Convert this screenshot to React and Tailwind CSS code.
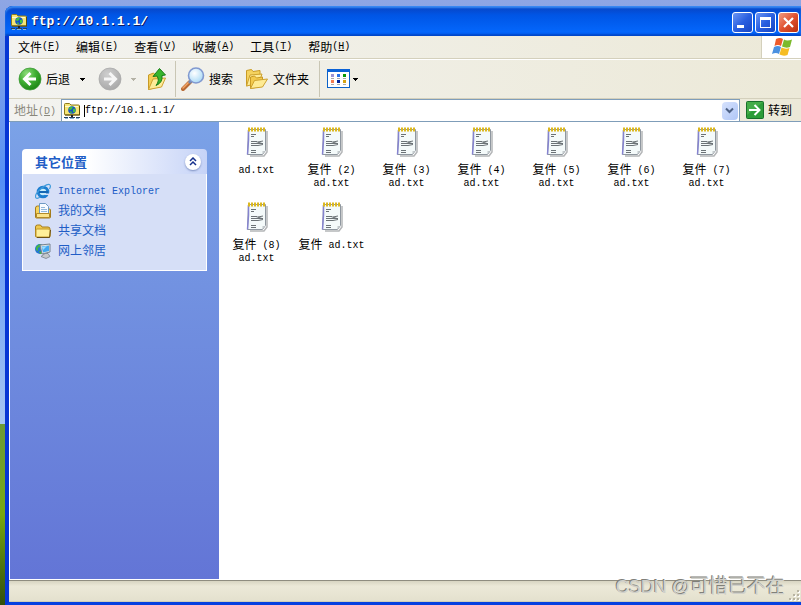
import React, { useState } from 'react';

const menus = [
  { name: '文件', hotkey: 'F' },
  { name: '编辑', hotkey: 'E' },
  { name: '查看', hotkey: 'V' },
  { name: '收藏', hotkey: 'A' },
  { name: '工具', hotkey: 'T' },
  { name: '帮助', hotkey: 'H' },
];

const files = [
  'ad.txt',
  '复件 (2) ad.txt',
  '复件 (3) ad.txt',
  '复件 (4) ad.txt',
  '复件 (5) ad.txt',
  '复件 (6) ad.txt',
  '复件 (7) ad.txt',
  '复件 (8) ad.txt',
  '复件 ad.txt',
];

const places = [
  { name: 'Internet Explorer', icon: ExplorerIcon },
  { name: '我的文档', icon: DocumentsIcon },
  { name: '共享文档', icon: FolderIcon },
  { name: '网上邻居', icon: NetworkIcon },
];

// Latin words are half as wide as a Chinese glyph, so they get the mono face
function Label({ text }) {
  return text.split(/( |[!-~]+)/).filter(Boolean).map((part, i) => (
    /^[ -~]/.test(part)
      ? <span key={i} className="font-['Liberation_Mono',monospace] text-[10px] leading-2 align-[1px]">{part}</span>
      : <span key={i}>{part}</span>
  ));
}

function FtpIcon() {
  return (
    <svg className="w-4 h-4 shrink-0" viewBox="0 0 16 16" aria-hidden="true">
      <path d="M.5 11V1.500q0-1 1-1h4L7 2h7.500q1 0 1 1v8q0 1-1 1h-13q-1 0-1-1z" fill="#f6e676" stroke="#8e7a1c" />
      <path d="M1 3h13v1H1z" fill="#fffbd0" />
      <path d="M15 3h1v9.500H1v-1h14z" fill="#5c4c08" />
      <circle cx="8" cy="7" r="3.800" fill="#1652c4" />
      <path d="M5 5q2-2 4-1.500L8 6 6.500 7 5 6.500zM9 6l2-.5q1 2-.5 4L9 9zM6 8l2 1-.5 1.500Q6 10 6 8z" fill="#3fc23f" />
      <path d="M7 12h2v2H7z" fill="#222" />
      <path d="M0 14.500h4M5 14.500h6M12 14.500h4" stroke="#27415f" />
      <path d="M1 15.500h3M6 15.500h4M12 15.500h3" stroke="#8cb6d8" />
    </svg>
  );
}

function WindowsFlag() {
  return (
    <svg className="w-5 h-5" viewBox="0 0 20 20" aria-hidden="true">
      <path d="M4 2q4-2 7 0L9 9Q6 7 2.500 9z" fill="#ee5a2a" />
      <path d="M12 2.500q3 2 8 0L18 10q-4 1.500-8-.5z" fill="#7cba2c" />
      <path d="M2 10q4-2 7 0l-2 7q-3-2-7 0z" fill="#4a90e0" />
      <path d="M9.500 10.500q4 2 8 .5l-2 7q-4 1.500-8-.5z" fill="#f6bd22" />
    </svg>
  );
}

function BackIcon() {
  return (
    <svg className="w-6 h-6" viewBox="0 0 24 24" aria-hidden="true">
      <defs>
        <radialGradient id="back" cx=".35" cy=".25" r=".8">
          <stop offset="0" stopColor="#8fdc7c" />
          <stop offset=".5" stopColor="#41b034" />
          <stop offset="1" stopColor="#1b8413" />
        </radialGradient>
      </defs>
      <circle cx="12" cy="12" r="11" fill="url(#back)" stroke="#3f9b38" strokeWidth=".8" />
      <path d="M12.500 6L6.500 12l6 6M7 12h11" fill="none" stroke="#fff" strokeWidth="3" />
    </svg>
  );
}

function ForwardIcon() {
  return (
    <svg className="w-6 h-6" viewBox="0 0 24 24" aria-hidden="true">
      <defs>
        <radialGradient id="forward" cx=".4" cy=".3" r=".8">
          <stop offset="0" stopColor="#cfcfcf" />
          <stop offset="1" stopColor="#a4a4a4" />
        </radialGradient>
      </defs>
      <circle cx="12" cy="12" r="11" fill="url(#forward)" stroke="#aaa" strokeWidth=".8" />
      <path d="M11.500 6l6 6-6 6M17 12H6" fill="none" stroke="#f6f6f6" strokeWidth="3" />
    </svg>
  );
}

function UpIcon() {
  return (
    <svg className="w-5 h-6" viewBox="0 0 20 24" aria-hidden="true">
      <path d="M1.500 22.500V8l5-2 2 2 6-1v12z" fill="#f4ce57" stroke="#c79a26" />
      <path d="M1.500 22.500L6 12l12.500-1-4 9z" fill="#fdeb98" stroke="#cfa233" />
      <path d="M6 9.500L12.500 1.500 18.500 8l-3.500.5q1 7-6 10 4-5 1-9.500z" fill="#37b52d" stroke="#187c17" />
    </svg>
  );
}

function SearchIcon() {
  return (
    <svg className="w-6 h-6" viewBox="0 0 24 24" aria-hidden="true">
      <defs>
        <radialGradient id="lens" cx=".4" cy=".35" r=".7">
          <stop offset="0" stopColor="#fff" />
          <stop offset="1" stopColor="#a5d8f6" />
        </radialGradient>
      </defs>
      <path d="M2 22l7-7" stroke="#b86a35" strokeWidth="4" strokeLinecap="round" />
      <path d="M2 21l6-6" stroke="#f3a566" strokeWidth="1.500" strokeLinecap="round" />
      <path d="M8 16l3-3" stroke="#7189b5" strokeWidth="3" />
      <circle cx="15" cy="8.500" r="7.500" fill="url(#lens)" stroke="#8199d0" strokeWidth="1.600" />
    </svg>
  );
}

function FoldersIcon() {
  return (
    <svg className="w-6 h-6" viewBox="0 0 24 24" aria-hidden="true">
      <path d="M1.500 19V3.500l5-1 1.500 2 7-1V14z" fill="#f5d35f" stroke="#c99b25" />
      <path d="M1.500 19L5 8l12-1-3 9z" fill="#fdeb98" stroke="#cda22f" />
      <path d="M5.500 21.500V10l4-1 2 2 6-1v9z" fill="#f3ca4d" stroke="#c99b25" />
      <path d="M5.500 21.500l4-8 13-1.500-5 8z" fill="#feeb94" stroke="#cda22f" />
    </svg>
  );
}

function ViewsIcon() {
  return (
    <svg className="w-6 h-5" viewBox="0 0 24 20" aria-hidden="true">
      <rect x=".5" y=".5" width="22" height="18" fill="#fff" stroke="#0b62c8" />
      <path d="M0 0h23v3H0z" fill="#0b62d6" />
      <path d="M4 5h3v3H4z" fill="#9c94d4" />
      <path d="M10 5h3v3h-3z" fill="#2b72e8" />
      <path d="M16 5h3v3h-3z" fill="#079807" />
      <path d="M4 11h3v3H4z" fill="#f47c50" />
      <path d="M10 11h3v3h-3z" fill="#06269a" />
      <path d="M16 11h3v3h-3z" fill="#d5a413" />
      <path d="M4 9.500h3M10 9.500h3M16 9.500h3M4 15.500h3M10 15.500h3M16 15.500h3" stroke="#a9a9a9" />
    </svg>
  );
}

function SmallArrow({ className }) {
  return (
    <svg className={`w-[5px] h-[3px] ${className}`} viewBox="0 0 5 3" shapeRendering="crispEdges" aria-hidden="true">
      <path d="M0 0h5v1H4v1H3v1H2V2H1V1H0z" fill="currentColor" />
    </svg>
  );
}

function ExplorerIcon() {
  return (
    <svg className="w-4 h-4" viewBox="0 0 16 16" aria-hidden="true">
      <circle cx="8" cy="9" r="4.800" fill="#c7edfb" stroke="#1c7ed0" strokeWidth="3" />
      <path d="M4 9h9" stroke="#1467b4" strokeWidth="2" />
      <path d="M10 10.500h5v1.500h-5z" fill="#d6dff7" />
      <path d="M1 15q-2-3 4-8.500Q13-.5 15 2q1 1.500-.5 4M1 15q1.500 1 4-1" fill="none" stroke="#3f9bdb" strokeWidth="1.200" />
    </svg>
  );
}

function DocumentsIcon() {
  return (
    <svg className="w-4 h-4" viewBox="0 0 16 16" aria-hidden="true">
      <path d="M.5 14V5q0-2 2-2h2v3h10q1 0 1 1v7q0 1-1 1h-13q-1 0-1-1z" fill="#f6d35b" stroke="#a47c1d" />
      <path d="M4.500 11V.5h6l3 3V11z" fill="#f7fbff" stroke="#6e9ac4" />
      <path d="M6 4.500h4M6 6.500h6M6 8.500h6" stroke="#91b7da" />
      <path d="M1.500 10.500h13v4h-13z" fill="#fbe38a" stroke="#b28a27" />
    </svg>
  );
}

function FolderIcon() {
  return (
    <svg className="w-4 h-4" viewBox="0 0 16 16" aria-hidden="true">
      <path d="M.5 13V4q0-2 2-2h3L7 4h6q2 0 2 2v7q0 1-1 1H1.500q-1 0-1-1z" fill="#f0c94e" stroke="#a47c1d" />
      <path d="M1 7q0-1 1-1h11q2 0 2 1v6q0 1-1 1H2q-1 0-1-1z" fill="#fff09a" stroke="#c39a2d" />
      <path d="M2 14.500h12.500L15.500 7" fill="none" stroke="#6b5115" />
    </svg>
  );
}

function NetworkIcon() {
  return (
    <svg className="w-4 h-4" viewBox="0 0 16 16" aria-hidden="true">
      <circle cx="5" cy="6" r="5" fill="#2476d2" />
      <path d="M1 4q2-3 5-3l-1 3-2 1v3L1 7zM4 8l3 1v2H5z" fill="#43b549" />
      <path d="M5 2l10-1v8l-8 2z" fill="#e4e5e1" stroke="#77828f" />
      <path d="M6.500 3.500L14 2.500v5.500L8 9.500z" fill="#41a7f2" />
      <path d="M7 4l5-1-4 4z" fill="#9cdcff" />
      <path d="M10 10.500h3l2 3-4 2-5-2z" fill="#c5c8cb" stroke="#77828f" strokeWidth=".8" />
    </svg>
  );
}

function NotepadIcon() {
  return (
    <svg className="w-[22px] h-[30px]" viewBox="0 0 22 30" aria-hidden="true">
      <path d="M4 29h14l3-4V4" fill="none" stroke="#b4b6b8" strokeWidth="1.500" />
      <path d="M2.500 2.500h17v21l-3 4h-15z" fill="#f4fafa" stroke="#8f979f" />
      <path d="M19 24h-2.500v3.500z" fill="#c3c9cc" />
      <path d="M2.500 3v10l-1 14.500" fill="none" stroke="#8583cf" strokeWidth="1.500" />
      <path d="M2 3.500h18" stroke="#6d6178" strokeDasharray="1 2" />
      <path d="M2 2.500h18" stroke="#dcb81f" strokeWidth="4" strokeDasharray="2 1" />
      <path d="M5 7.500h5M5 9.500h3M5 14.500h6M5 16.500h12M5 18.500h7M5 23.500h5M5 25.500h5" stroke="#6b7276" />
      <path d="M10 14.500l6 2M12 18.500l5-1M12 15l5-1" stroke="#6b7276" fill="none" />
    </svg>
  );
}

function TitleBar() {
  return (
    <header className="flex items-center h-[30px] shrink-0 pl-1.5 pr-0.5 pt-0.5 rounded-tl-lg bg-linear-to-b from-[#0842c0] from-0% via-[#0055e5] via-30% to-[#0466fb] to-85% shadow-[inset_0_2px_2px_#3b8cf5,inset_0_-2px_2px_#0046c8]">
      <FtpIcon />
      <h1 className="flex-1 ml-1 font-['Liberation_Mono',monospace] text-[13px] font-bold text-white [text-shadow:1px_1px_#0b1c66]">
        ftp://10.1.1.1/
      </h1>
      <div className="flex gap-0.5">
        <button aria-label="最小化" className="w-[21px] h-[21px] border border-white rounded-[3px] bg-linear-to-br from-[#6c95f4] via-[#2a5fe0] to-[#1745c4]">
          <svg viewBox="0 0 19 19" aria-hidden="true"><path d="M4 12h7v3H4z" fill="#fff" /></svg>
        </button>
        <button aria-label="最大化" className="w-[21px] h-[21px] border border-white rounded-[3px] bg-linear-to-br from-[#6c95f4] via-[#2a5fe0] to-[#1745c4]">
          <svg viewBox="0 0 19 19" aria-hidden="true"><path d="M4 4h11v11H4zM5 7v7h9V7z" fill="#fff" fillRule="evenodd" /></svg>
        </button>
        <button aria-label="关闭" className="w-[21px] h-[21px] border border-white rounded-[3px] bg-linear-to-br from-[#f09a80] via-[#e0512f] to-[#b82e0c]">
          <svg viewBox="0 0 19 19" aria-hidden="true"><path d="M5 5l9 9M14 5l-9 9" stroke="#fff" strokeWidth="2.200" /></svg>
        </button>
      </div>
    </header>
  );
}

function MenuBar() {
  return (
    <nav className="flex h-[23px] shrink-0 border-b border-[#d4d0bc]">
      <div className="flex flex-1 items-center pl-px">
        {menus.map((menu) => (
          <button key={menu.name} className="flex items-center px-2 whitespace-nowrap">
            {menu.name}
            <span className="font-['Liberation_Mono',monospace] text-[10px]">
              (<u>{menu.hotkey}</u>)
            </span>
          </button>
        ))}
      </div>
      <div className="flex items-center justify-center w-10 border-l border-[#d4d0bc] bg-white">
        <WindowsFlag />
      </div>
    </nav>
  );
}

function ToolBar() {
  return (
    <div className="flex items-center h-10 shrink-0 pl-[9px] border-t border-t-white border-b border-b-[#d4d0bc]">
      <button className="flex items-center gap-1">
        <BackIcon />
        后退
      </button>
      <button aria-label="后退历史" className="flex items-center justify-center w-6 h-6">
        <SmallArrow className="text-black" />
      </button>
      <button aria-label="前进" disabled className="ml-1">
        <ForwardIcon />
      </button>
      <button aria-label="前进历史" disabled className="flex items-center justify-center w-[22px] h-6">
        <SmallArrow className="text-[#b4b2a6]" />
      </button>
      <button aria-label="向上" className="ml-[3px]">
        <UpIcon />
      </button>
      <div className="w-px h-9 ml-2 mr-[5px] bg-[#c9c6b4]" />
      <button className="flex items-center gap-1">
        <SearchIcon />
        搜索
      </button>
      <button className="flex items-center gap-1 ml-3">
        <FoldersIcon />
        文件夹
      </button>
      <div className="w-px h-9 ml-2.5 mr-[7px] bg-[#c9c6b4]" />
      <button aria-label="查看" className="flex items-center gap-0.5">
        <ViewsIcon />
        <SmallArrow className="text-black" />
      </button>
    </div>
  );
}

function AddressBar() {
  const [address, setAddress] = useState('ftp://10.1.1.1/');

  return (
    <form className="flex items-center h-[22px] shrink-0 pl-[5px] pr-[9px]" onSubmit={(e) => e.preventDefault()}>
      <label htmlFor="address" className="w-[47px] text-[#8a887c] whitespace-nowrap">
        地址<span className="font-['Liberation_Mono',monospace] text-[10px] leading-2 align-[1px]">(<u>D</u>)</span>
      </label>
      <div className="flex flex-1 items-center h-[22px] pl-0.5 pr-px border border-b-0 border-[#7f9db9] bg-white">
        <FtpIcon />
        <div className="w-px h-3 ml-1 bg-black" />
        <input
          id="address"
          value={address}
          onChange={(e) => setAddress(e.target.value)}
          className="flex-1 min-w-0 outline-none font-['Liberation_Mono',monospace] text-[10px]"
        />
        <button type="button" aria-label="地址列表" className="flex items-center justify-center w-4 h-[18px] rounded-sm bg-linear-to-br from-[#d6e2fd] to-[#b0c6f6]">
          <svg className="w-[9px] h-[7px]" viewBox="0 0 9 7" aria-hidden="true">
            <path d="M1 1.500L4.500 5 8 1.500" fill="none" stroke="#4d6185" strokeWidth="2" />
          </svg>
        </button>
      </div>
      <button type="submit" className="flex items-center gap-1 ml-1.5">
        <svg className="w-[18px] h-[18px]" viewBox="0 0 18 18" aria-hidden="true">
          <rect x=".5" y=".5" width="17" height="17" rx="1" fill="#2c9c38" stroke="#17702a" />
          <path d="M1 1h16L1 14z" fill="#55b854" opacity=".6" />
          <path d="M8.500 4l5 5-5 5M13 9H3" fill="none" stroke="#fff" strokeWidth="2" />
        </svg>
        转到
      </button>
    </form>
  );
}

function Sidebar() {
  const [open, setOpen] = useState(true);

  return (
    <aside className="w-[210px] shrink-0 px-3 pt-[27px] border-l border-white bg-linear-to-b from-[#7ba2e7] to-[#6375d6]">
      <div className="flex items-center justify-between h-[25px] pl-[13px] pr-1.5 rounded-t bg-linear-to-r from-white from-35% to-[#c6d3f7]">
        <h2 className="text-[13px] font-bold text-[#215dc6]">其它位置</h2>
        <button
          aria-label="折叠"
          onClick={() => setOpen(!open)}
          className="flex items-center justify-center w-4 h-4 rounded-full bg-white shadow-[0_1px_2px_#7c8fc0]"
        >
          <svg className="w-2 h-[9px]" viewBox="0 0 8 9" aria-hidden="true">
            <path d="M1 4l3-3 3 3M1 8l3-3 3 3" fill="none" stroke="#16308c" strokeWidth="1.500" />
          </svg>
        </button>
      </div>
      {open && (
        <ul className="pl-3 pt-[7px] pb-[9px] border border-t-0 border-white bg-[#d6dff7]">
          {places.map((place) => (
            <li key={place.name}>
              <a href="#" className="flex items-center h-5 gap-[7px] text-[#215dc6]">
                <place.icon />
                <span className="h-5 leading-[18px]"><Label text={place.name} /></span>
              </a>
            </li>
          ))}
        </ul>
      )}
    </aside>
  );
}

function FileGrid() {
  return (
    <main className="flex-1 bg-white">
      <ul className="grid grid-cols-[repeat(auto-fill,75px)] auto-rows-[75px] pt-[5px]">
        {files.map((file) => (
          <li key={file} className="flex justify-center">
            <button className="flex flex-col items-center w-full">
              <NotepadIcon />
              <span className="px-1 mt-[5px] leading-[13px]"><Label text={file} /></span>
            </button>
          </li>
        ))}
      </ul>
    </main>
  );
}

function StatusBar() {
  return (
    <footer className="flex items-end justify-end h-[22px] shrink-0 border-t border-[#8f8d80] bg-linear-to-b from-[#d8d5c2] from-0% via-[#ece9d8] via-25% to-[#e3e0cd] shadow-[inset_0_-1px_#d0cdb8]">
      <svg className="w-3 h-3" viewBox="0 0 12 12" aria-hidden="true">
        <path d="M9 1h2v2H9zM5 5h2v2H5zM9 5h2v2H9zM1 9h2v2H1zM5 9h2v2H5zM9 9h2v2H9z" fill="#fff" />
        <path d="M8 0h2v2H8zM4 4h2v2H4zM8 4h2v2H8zM0 8h2v2H0zM4 8h2v2H4zM8 8h2v2H8z" fill="#b8b4a2" />
      </svg>
    </footer>
  );
}

export default function App() {
  return (
    <div className="relative h-screen pl-[5px] pt-1.5 overflow-hidden bg-linear-to-b from-[#8ea6e4] from-0% via-[#5590f5] via-30% to-[#a5c5f2] to-70% font-['Noto_Sans_CJK_SC',sans-serif] text-xs leading-4 text-black">
      {/* Grass at the foot of the wallpaper */}
      <div className="absolute left-0 bottom-0 w-[5px] h-[30%] bg-linear-to-b from-[#6c9a35] via-[#79a80e] to-[#33500c]" />

      <div className="relative flex flex-col h-full rounded-tl-lg bg-[#0842c0]">
        <TitleBar />
        <div className="flex flex-col flex-1 min-h-0 border-l-4 border-b-3 border-l-[#0636d4] border-b-[#0540e0] bg-linear-to-r from-[#f3f3f0] to-[#ece9d8]">
          <MenuBar />
          <ToolBar />
          <AddressBar />
          <div className="flex flex-1 min-h-0 border-t border-[#7f9db9] border-b border-b-white">
            <Sidebar />
            <FileGrid />
          </div>
          <StatusBar />
        </div>
      </div>

      <p className="absolute right-4 bottom-1 flex items-center font-['Liberation_Sans','Noto_Sans_CJK_SC',sans-serif] text-lg leading-7 text-[#d0d0ca] [text-shadow:-1px_-1px_#80807a]">
        <span className="whitespace-pre">CSDN @</span>
        <span className="text-[19px]">可惜已不在</span>
      </p>
    </div>
  );
}
